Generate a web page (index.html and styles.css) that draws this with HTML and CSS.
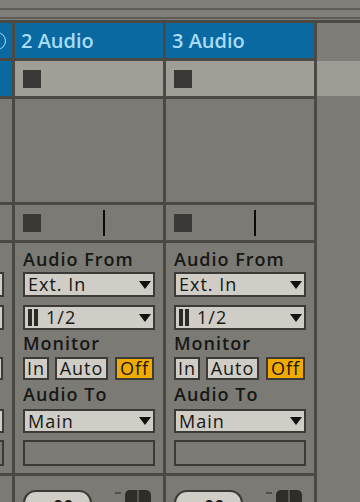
FILE: index.html
```html
<!DOCTYPE html>
<html lang="en">
<head>
    <meta charset="UTF-8">
    <meta name="viewport" content="width=device-width, initial-scale=1.0">
    <title>Session View</title>
    <link rel="stylesheet" href="styles.css">
</head>
<body>
    <div class="ruler">
        <div class="ruler-line"></div>
        <div class="ruler-line second"></div>
    </div>

    <div class="session">
        <!-- track 1 only shows its right edge -->
        <div class="track track-first">
            <div class="head"><span></span><i class="fold"></i></div>
            <div class="slot clip"></div>
            <div class="spacer"></div>
            <div class="status"><i class="stop"></i><i class="tick"></i></div>
            <div class="io">
                <label></label>
                <div class="dropdown"></div>
                <div class="dropdown channel"><span class="bars"><i></i><i></i></span></div>
                <label class="label-gap"></label>
                <div class="monitor">
                    <span class="btn btn-in"></span>
                    <span class="btn btn-auto"></span>
                    <span class="btn btn-off"></span>
                </div>
                <label class="label-to"></label>
                <div class="dropdown main"></div>
                <div class="empty-box"></div>
            </div>
            <div class="mixer">
                <div class="pill"></div>
                <i class="dash"></i>
                <div class="meter"></div>
            </div>
        </div>

        <div class="track">
            <div class="head"><span>2 Audio</span></div>
            <div class="slot"><i class="stop"></i></div>
            <div class="spacer"></div>
            <div class="status"><i class="stop"></i><i class="tick"></i></div>
            <div class="io">
                <label>Audio From</label>
                <div class="dropdown">Ext. In</div>
                <div class="dropdown channel"><span class="bars"><i></i><i></i></span>1/2</div>
                <label class="label-gap">Monitor</label>
                <div class="monitor">
                    <span class="btn btn-in">In</span>
                    <span class="btn btn-auto">Auto</span>
                    <span class="btn btn-off active">Off</span>
                </div>
                <label class="label-to">Audio To</label>
                <div class="dropdown main">Main</div>
                <div class="empty-box"></div>
            </div>
            <div class="mixer">
                <div class="pill">00</div>
                <i class="dash"></i>
                <div class="meter"></div>
            </div>
        </div>

        <div class="track">
            <div class="head"><span>3 Audio</span></div>
            <div class="slot"><i class="stop"></i></div>
            <div class="spacer"></div>
            <div class="status"><i class="stop"></i><i class="tick"></i></div>
            <div class="io">
                <label>Audio From</label>
                <div class="dropdown">Ext. In</div>
                <div class="dropdown channel"><span class="bars"><i></i><i></i></span>1/2</div>
                <label class="label-gap">Monitor</label>
                <div class="monitor">
                    <span class="btn btn-in">In</span>
                    <span class="btn btn-auto">Auto</span>
                    <span class="btn btn-off active">Off</span>
                </div>
                <label class="label-to">Audio To</label>
                <div class="dropdown main">Main</div>
                <div class="empty-box"></div>
            </div>
            <div class="mixer">
                <div class="pill">00</div>
                <i class="dash"></i>
                <div class="meter"></div>
            </div>
        </div>

        <div class="filler">
            <div class="filler-head"></div>
            <div class="filler-slot"></div>
            <div class="filler-rest"></div>
        </div>
    </div>
</body>
</html>
```

FILE: styles.css
```css
html {
    overflow: hidden;
}
body {
    margin: 0;
    height: 502px;
    overflow: hidden;
    background-color: #7b7a74;
    font-family: "Open Sans", "DejaVu Sans", sans-serif;
    color: #171716;
}
.ruler {
    height: 20px;
    background-color: #807f79;
    display: flex;
    flex-direction: column;
}
.ruler-line {
    height: 2px;
    margin-top: 8px;
    background-color: #5e5d58;
}
.ruler-line.second {
    margin-top: 7px;
}
.session {
    display: flex;
    gap: 3px;
    padding-top: 3px;
    height: 482px;
    box-sizing: border-box;
    overflow: hidden;
    background-color: #4a4944;
}
.track {
    flex: 0 0 148px;
    display: flex;
    flex-direction: column;
    gap: 3px;
}
.track-first {
    margin-left: -136px;
}
.head {
    height: 35px;
    flex-shrink: 0;
    background-color: #0b69a1;
    color: #a8dcf6;
    font-size: 20px;
    font-weight: 600;
    padding: 0 6px 0 6px;
    display: flex;
    align-items: center;
    justify-content: space-between;
    box-sizing: border-box;
}
.fold {
    width: 18px;
    height: 18px;
    box-sizing: border-box;
    border: 1.5px solid #a8dcf6;
    border-radius: 50%;
}
.slot {
    height: 35px;
    flex-shrink: 0;
    background-color: #a09e97;
    padding: 9px 8px;
    box-sizing: border-box;
}
.slot.clip {
    background-color: #0b69a1;
}
.stop {
    display: block;
    width: 18px;
    height: 18px;
    background-color: #3a3935;
}
.spacer {
    height: 103px;
    flex-shrink: 0;
    background-color: #7b7a74;
}
.status {
    height: 35px;
    flex-shrink: 0;
    background-color: #7b7a74;
    padding-left: 8px;
    display: flex;
    align-items: center;
    box-sizing: border-box;
}
.tick {
    width: 2px;
    height: 26px;
    margin-left: 62px;
    background-color: #0a0a0a;
}
.io {
    height: 230px;
    flex-shrink: 0;
    background-color: #7b7a74;
    padding: 6px 8px 0 8px;
    display: flex;
    flex-direction: column;
    box-sizing: border-box;
}
label {
    display: block;
    height: 20px;
    line-height: 20px;
    font-size: 18px;
    font-weight: 600;
    letter-spacing: 1px;
}
.label-gap {
    margin-top: 3px;
}
.label-to {
    margin-top: 4px;
}
.dropdown {
    height: 25px;
    margin-top: 3px;
    border: 2px solid #3b3a36;
    background-color: #cfcdc6;
    box-sizing: border-box;
    padding-left: 3px;
    font-size: 18px;
    line-height: 21px;
    letter-spacing: 1px;
    display: flex;
    align-items: center;
}
.dropdown::after {
    content: "";
    margin-left: auto;
    margin-right: 2px;
    border-left: 6px solid transparent;
    border-right: 6px solid transparent;
    border-top: 8px solid #111;
}
.dropdown.channel {
    margin-top: 8px;
}
.dropdown.main {
    height: 24px;
    margin-top: 5px;
}
.bars {
    display: flex;
    gap: 2px;
    margin: 0 8px 0 0;
}
.bars i {
    width: 4px;
    height: 17px;
    background-color: #2b2a27;
}
.monitor {
    display: flex;
    margin-top: 4px;
}
.btn {
    height: 23px;
    border: 2px solid #3b3a36;
    background-color: #cfcdc6;
    box-sizing: border-box;
    font-size: 18px;
    line-height: 19px;
    letter-spacing: 1px;
    text-align: center;
}
.btn-in {
    width: 26px;
}
.btn-auto {
    width: 53px;
    margin-left: 6px;
}
.btn-off {
    width: 39px;
    margin-left: 7px;
}
.btn.active {
    background-color: #f0aa00;
}
.empty-box {
    height: 26px;
    margin-top: 7px;
    border: 2px solid #3b3a36;
    box-sizing: border-box;
}
.mixer {
    flex: 1;
    min-height: 0;
    overflow: hidden;
    background-color: #7b7a74;
    padding: 14px 8px 0 8px;
    display: flex;
    align-items: flex-start;
}
.pill {
    width: 69px;
    height: 32px;
    flex-shrink: 0;
    border: 2px solid #3b3a36;
    border-radius: 13px;
    background-color: #cfcdc6;
    box-sizing: border-box;
    font-size: 18px;
    font-weight: 600;
    padding: 4px 0 0 28px;
    line-height: 20px;
}
.dash {
    width: 6px;
    height: 2px;
    flex-shrink: 0;
    margin: 2px 4px 0 23px;
    background-color: #504f4a;
}
.meter {
    width: 26px;
    height: 40px;
    flex-shrink: 0;
    border-radius: 5px 5px 0 0;
    background-color: #2e2d2a;
    display: flex;
    justify-content: center;
}
.meter::after {
    content: "";
    width: 2px;
    height: 100%;
    background-color: #57564f;
}
.filler {
    flex: 1;
    display: flex;
    flex-direction: column;
}
.filler-head {
    height: 38px;
    background-color: #7e7d77;
}
.filler-slot {
    height: 35px;
    background-color: #9d9b94;
}
.filler-rest {
    flex: 1;
    background-color: #7b7a74;
}
```
